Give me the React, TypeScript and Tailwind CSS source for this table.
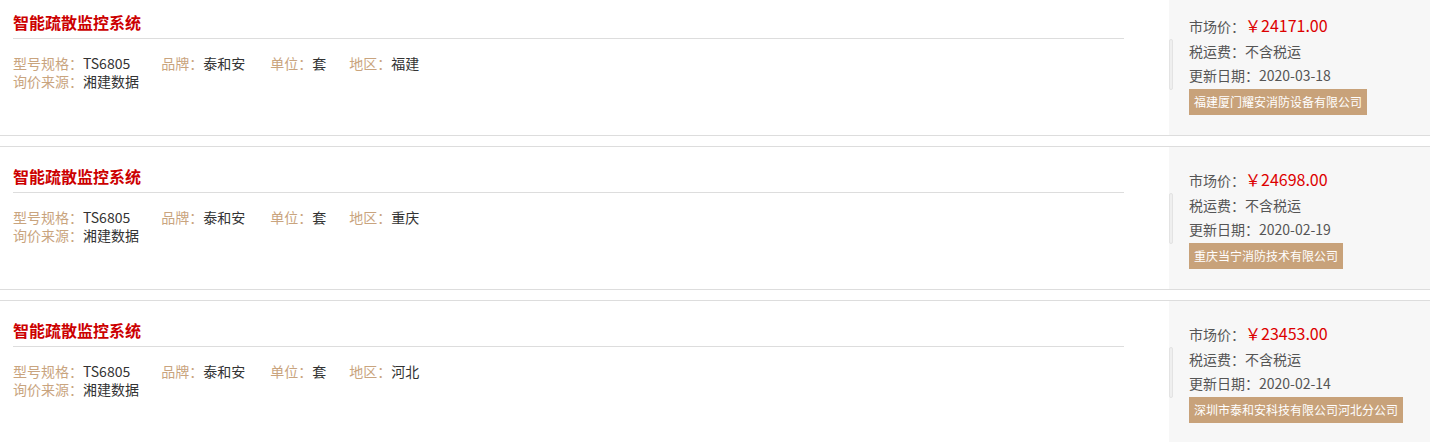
const items = [
  {
    price: "24171.00",
    date: "2020-03-18",
    region: "福建",
    company: "福建厦门耀安消防设备有限公司",
  },
  {
    price: "24698.00",
    date: "2020-02-19",
    region: "重庆",
    company: "重庆当宁消防技术有限公司",
  },
  {
    price: "23453.00",
    date: "2020-02-14",
    region: "河北",
    company: "深圳市泰和安科技有限公司河北分公司",
  },
];

function Attr({ label, value, gap }: { label: string; value: string; gap: string }) {
  return (
    <span className={gap}>
      <span className="text-[#c9a47e]">{label}：</span>
      <span className="text-[#333]">{value}</span>
    </span>
  );
}

export default function App() {
  return (
    <div
      className="-mt-[8px] bg-white"
      style={{ fontFamily: '"Noto Sans CJK SC", "Noto Sans", sans-serif' }}
    >
      {items.map((item, i) => (
        <div key={i} className="mb-[10px] flex h-[144px] border-y border-[#ddd]">
          <div className="flex-1 pl-[13px] pr-[45px] pt-[17px]">
            <div className="h-[29px] border-b border-[#ddd] text-[16px] font-semibold leading-[24px] text-[#cc0000]">
              智能疏散监控系统
            </div>
            <div className="mt-[15px] text-[14px] leading-[18px]">
              <div>
                <Attr label="型号规格" value="TS6805" gap="mr-[31px]" />
                <Attr label="品牌" value="泰和安" gap="mr-[25px]" />
                <Attr label="单位" value="套" gap="mr-[23px]" />
                <Attr label="地区" value={item.region} gap="" />
              </div>
              <div>
                <Attr label="询价来源" value="湘建数据" gap="" />
              </div>
            </div>
          </div>
          <div className="relative w-[261px] bg-[#f7f7f7] pl-[20px] pt-[21px] text-[14px] leading-[24.5px] text-[#555]">
            <span className="absolute left-0 top-[46px] h-[51px] w-[4px] rounded-sm border border-[#e3e3e3] bg-[#efefef]" />
            <div className="h-[24.5px]">
              市场价：<span className="text-[16px] leading-none text-[#dd0000]">￥{item.price}</span>
            </div>
            <div>税运费：不含税运</div>
            <div>更新日期：{item.date}</div>
            <div className="mt-[1px] inline-block h-[26px] bg-[#c8a27a] px-[5px] text-[12px] leading-[26px] text-white">
              {item.company}
            </div>
          </div>
        </div>
      ))}
    </div>
  );
}
